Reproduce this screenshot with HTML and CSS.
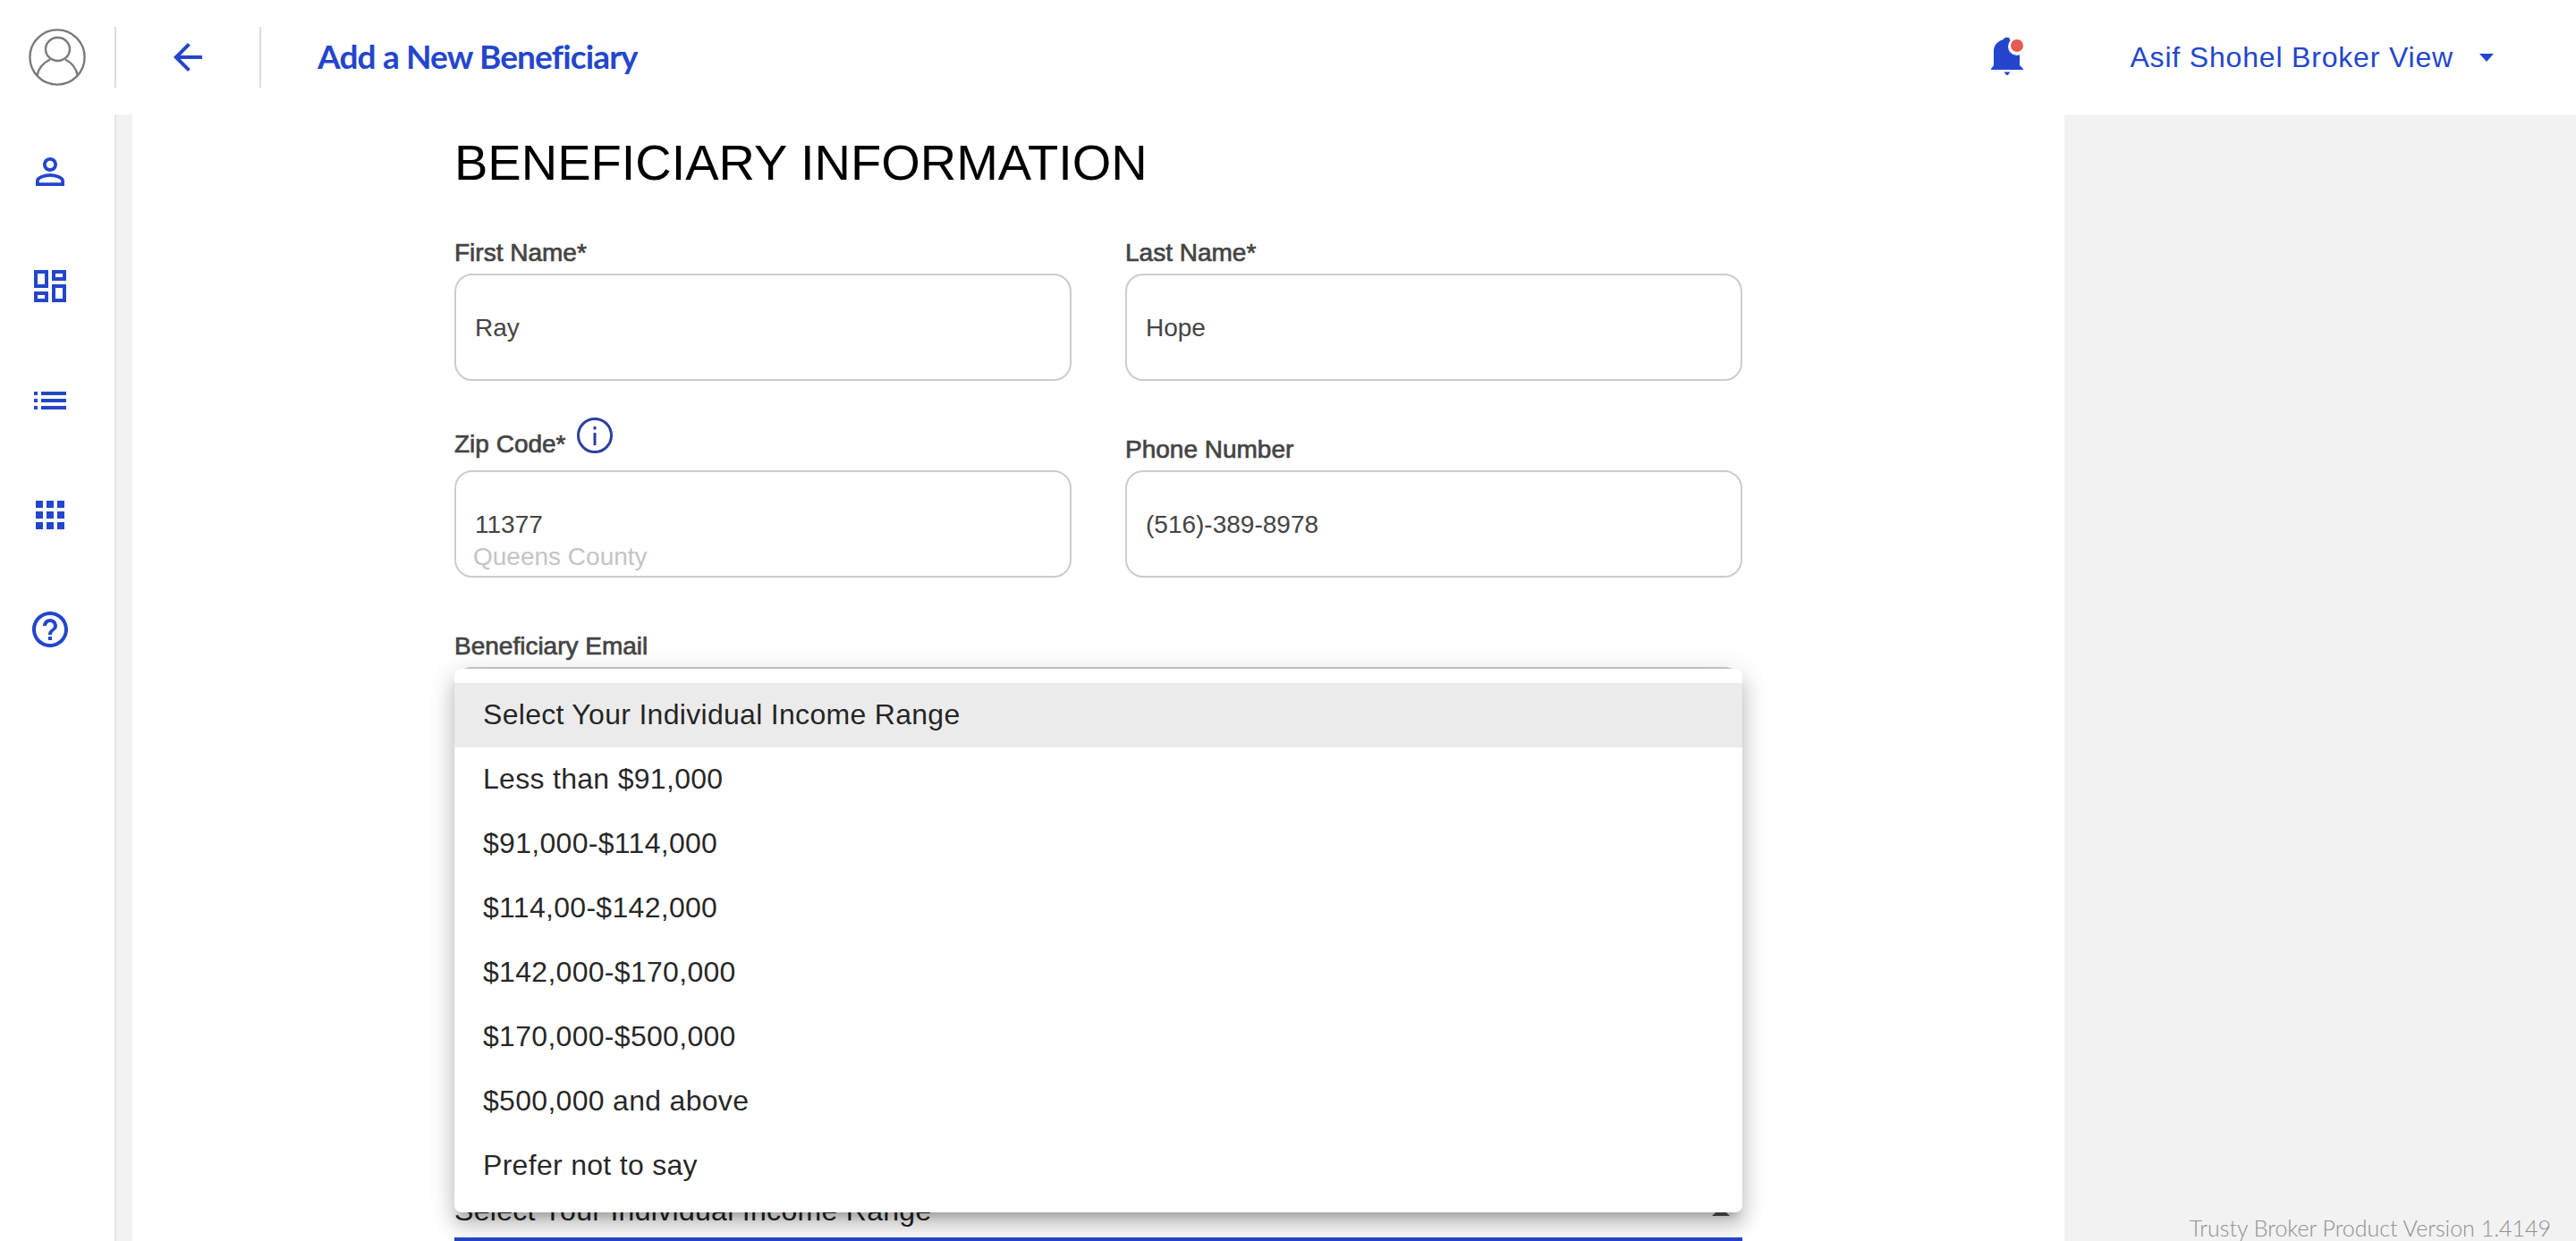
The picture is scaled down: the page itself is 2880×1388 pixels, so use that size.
FILE: index.html
```html
<!DOCTYPE html>
<html lang="en">
<head>
<meta charset="utf-8">
<title>Add a New Beneficiary</title>
<link rel="stylesheet" href="styles.css">
</head>
<body>
<div class="app">
  <header class="topbar">
    <svg class="avatar" viewBox="0 0 64 64" fill="none" stroke="#7a7a7a" stroke-width="2.4">
      <circle cx="32" cy="32" r="30.6"/>
      <ellipse cx="32.5" cy="23" rx="13.5" ry="13"/>
      <path d="M9.5 53C11 43 18 37.5 24 34.5M41 34.5C47 37.5 53 43 55 53"/>
    </svg>
    <span class="divider"></span>
    <svg class="icon back" viewBox="0 0 24 24"><path d="M20 11H7.83l5.59-5.59L12 4l-8 8 8 8 1.41-1.41L7.83 13H20v-2z"/></svg>
    <span class="divider second"></span>
    <h1 class="title">Add a New Beneficiary</h1>
    <svg class="bell" viewBox="0 0 36 42">
      <path class="bell-body" d="M15 38.500h6c0 .8-1.500 3.500-3 3.500s-3-2.700-3-3.500zM36 36H0v-1l3-4V15C3 9 7 4 14 2V2c0-1.500 2-2 4-2s3 .5 3 2v1c6 1.500 11 6 11 12v16l4 4z"/>
      <circle class="bell-ring" cx="29" cy="10" r="10"/>
      <ellipse class="bell-dot" cx="29" cy="9" rx="7" ry="7"/>
    </svg>
    <span class="user">Asif Shohel Broker View</span>
    <svg class="caret" viewBox="0 0 16 9"><path d="M0 0h16L8 9z"/></svg>
  </header>
  <div class="body">
    <nav class="sidebar">
      <svg class="icon" viewBox="0 0 24 24"><path d="M12 5.900c1.160 0 2.100.94 2.100 2.100s-.94 2.100-2.100 2.100S9.900 9.160 9.900 8s.94-2.100 2.100-2.100m0 9c2.970 0 6.100 1.460 6.100 2.100v1.100H5.900V17c0-.64 3.130-2.100 6.100-2.100M12 4C9.790 4 8 5.790 8 8s1.790 4 4 4 4-1.790 4-4-1.790-4-4-4zm0 9c-2.670 0-8 1.340-8 4v3h16v-3c0-2.660-5.330-4-8-4z"/></svg>
      <svg class="icon" viewBox="0 0 24 24"><path d="M19 5v2h-4V5h4M9 5v6H5V5h4m10 8v6h-4v-6h4M9 17v2H5v-2h4M21 3h-8v6h8V3zM11 3H3v10h8V3zm10 8h-8v10h8V11zm-10 4H3v6h8v-6z"/></svg>
      <svg class="icon" viewBox="0 0 24 24"><path d="M3 13h2v-2H3v2zm0 4h2v-2H3v2zm0-8h2V7H3v2zm4 4h14v-2H7v2zm0 4h14v-2H7v2zM7 7v2h14V7H7z"/></svg>
      <svg class="icon" viewBox="0 0 24 24"><path d="M4 8h4V4H4v4zm6 12h4v-4h-4v4zm-6 0h4v-4H4v4zm0-6h4v-4H4v4zm6 0h4v-4h-4v4zm6-10v4h4V4h-4zm-6 4h4V4h-4v4zm6 6h4v-4h-4v4zm0 6h4v-4h-4v4z"/></svg>
      <svg class="icon" viewBox="0 0 24 24"><path d="M11 18h2v-2h-2v2zm1-16C6.480 2 2 6.480 2 12s4.480 10 10 10 10-4.480 10-10S17.520 2 12 2zm0 18c-4.410 0-8-3.590-8-8s3.590-8 8-8 8 3.590 8 8-3.590 8-8 8zm0-14c-2.210 0-4 1.790-4 4h2c0-1.100.9-2 2-2s2 .9 2 2c0 2-3 1.750-3 5h2c0-2.250 3-2.500 3-5 0-2.210-1.790-4-4-4z"/></svg>
    </nav>
    <div class="strip"></div>
    <main class="main">
      <h2 class="heading">BENEFICIARY INFORMATION</h2>
      <div class="sheet">
        <div class="grid">
          <div class="field">
            <label class="label">First Name*</label>
            <div class="input">Ray</div>
          </div>
          <div class="field">
            <label class="label">Last Name*</label>
            <div class="input">Hope</div>
          </div>
          <div class="field">
            <label class="label raised">Zip Code*
              <svg class="info" viewBox="0 0 40 40" fill="none"><circle cx="20" cy="20" r="18.500" stroke="#2b409c" stroke-width="3"/><rect x="18.500" y="17" width="3" height="14" fill="#2b409c"/><rect x="18.500" y="10" width="3" height="3.500" fill="#2b409c"/></svg>
            </label>
            <div class="input zip">
              <span>11377</span>
              <span class="county">Queens County</span>
            </div>
          </div>
          <div class="field">
            <label class="label">Phone Number</label>
            <div class="input">(516)-389-8978</div>
          </div>
          <div class="field wide">
            <label class="label">Beneficiary Email</label>
            <div class="input"></div>
          </div>
        </div>
        <div class="select">
          <span>Select Your Individual Income Range</span>
          <svg class="select-arrow" viewBox="0 0 20 10"><path d="M0 10L10 0l10 10z"/></svg>
        </div>
        <ul class="menu">
          <li class="option active">Select Your Individual Income Range</li>
          <li class="option">Less than $91,000</li>
          <li class="option">$91,000-$114,000</li>
          <li class="option">$114,00-$142,000</li>
          <li class="option">$142,000-$170,000</li>
          <li class="option">$170,000-$500,000</li>
          <li class="option">$500,000 and above</li>
          <li class="option">Prefer not to say</li>
        </ul>
      </div>
    </main>
    <aside class="aside">
      <span class="version">Trusty Broker Product Version 1.4149</span>
    </aside>
  </div>
</div>
</body>
</html>
```

FILE: styles.css
```css
* { box-sizing: border-box; }
html, body { margin: 0; padding: 0; height: 100%; }
body { background: #fff; font-family: "Liberation Sans", Arial, sans-serif; overflow: hidden; }
.app { height: 1388px; display: flex; flex-direction: column; overflow: hidden; }

.topbar { height: 128px; flex: none; display: flex; align-items: center; background: #fff; }
.avatar { width: 64px; height: 64px; margin-left: 32px; flex: none; }
.divider { width: 2px; height: 68px; background: #dcdcdc; margin-left: 32px; flex: none; }
.divider.second { margin-left: 56px; }
.icon { width: 48px; height: 48px; fill: #2346cc; flex: none; }
.back { margin-left: 56px; }
.title { margin: -2px 0 0 63px; font: 700 37px/48px Lato, sans-serif; color: #2346cc; letter-spacing: -0.85px; }
.bell { width: 36px; height: 42px; margin: -2px 0 0 auto; flex: none; }
.bell-body { fill: #2346cc; }
.bell-ring { fill: #fff; }
.bell-dot { fill: #e25c54; }
.user { margin-left: 119px; font-size: 32px; line-height: 40px; color: #2346cc; letter-spacing: 0.82px; }
.caret { width: 16px; height: 9px; margin-left: 29px; margin-right: 92px; fill: #2346cc; flex: none; }

.body { flex: 1; display: flex; min-height: 0; }
.sidebar { width: 128px; flex: none; display: flex; flex-direction: column; gap: 80px; padding: 40px 0 0 32px; background: #fff; }
.strip { width: 20px; flex: none; background: #f2f2f2; border-left: 2px solid #e4e4e4; }
.main { flex: 1; min-width: 0; padding-left: 360px; overflow: hidden; background: #fff; }
.aside { width: 572px; flex: none; background: #f2f2f2; display: flex; flex-direction: column; justify-content: flex-end; align-items: flex-end; padding: 0 28px 2px 0; }
.version { font: 300 25px/26px Lato, sans-serif; color: #8f8f8f; }

.heading { margin: 22px 0 44px; font-size: 56px; line-height: 64px; font-weight: 400; color: #000; }
.sheet { position: relative; width: 1440px; }
.grid { display: grid; grid-template-columns: 690px 690px; grid-auto-rows: 168px; column-gap: 60px; row-gap: 52px; align-items: end; }
.wide { grid-column: 1 / 3; }
.label { display: flex; align-items: flex-start; height: 36px; margin-bottom: 5px; font-size: 28px; line-height: 36px; color: #444; -webkit-text-stroke: 0.7px #444; }
.label.raised { margin-bottom: 11px; }
.info { width: 40px; height: 40px; margin: -12px 0 0 12px; flex: none; }
.input { height: 120px; border: 2px solid #ccc; border-radius: 20px; padding: 2px 21px 0; display: flex; align-items: center; font-size: 28px; color: #444; background: #fff; }
.input.zip { flex-direction: column; align-items: flex-start; padding-top: 41px; line-height: 36px; }
.county { color: #c4c4c4; margin-left: -2px; }

.select { margin-top: 468px; height: 54px; display: flex; justify-content: space-between; align-items: flex-start; border-bottom: 4px solid #2346c9; font-size: 32px; line-height: 40px; color: #222; letter-spacing: 0.3px; }
.select-arrow { width: 20px; height: 10px; margin: 16px 14px 0 0; fill: #555; flex: none; }

.menu { position: absolute; left: 0; top: 490px; width: 1440px; margin: 0; padding: 16px 0; list-style: none; background: #fff; border-radius: 8px; box-shadow: 0 10px 10px -6px rgba(0,0,0,.2), 0 16px 20px 2px rgba(0,0,0,.14), 0 6px 28px 4px rgba(0,0,0,.12); }
.option { height: 72px; padding: 0 32px 1px; display: flex; align-items: center; font-size: 32px; letter-spacing: 0.3px; color: rgba(0,0,0,.87); }
.option.active { background: #ebebeb; }
```
